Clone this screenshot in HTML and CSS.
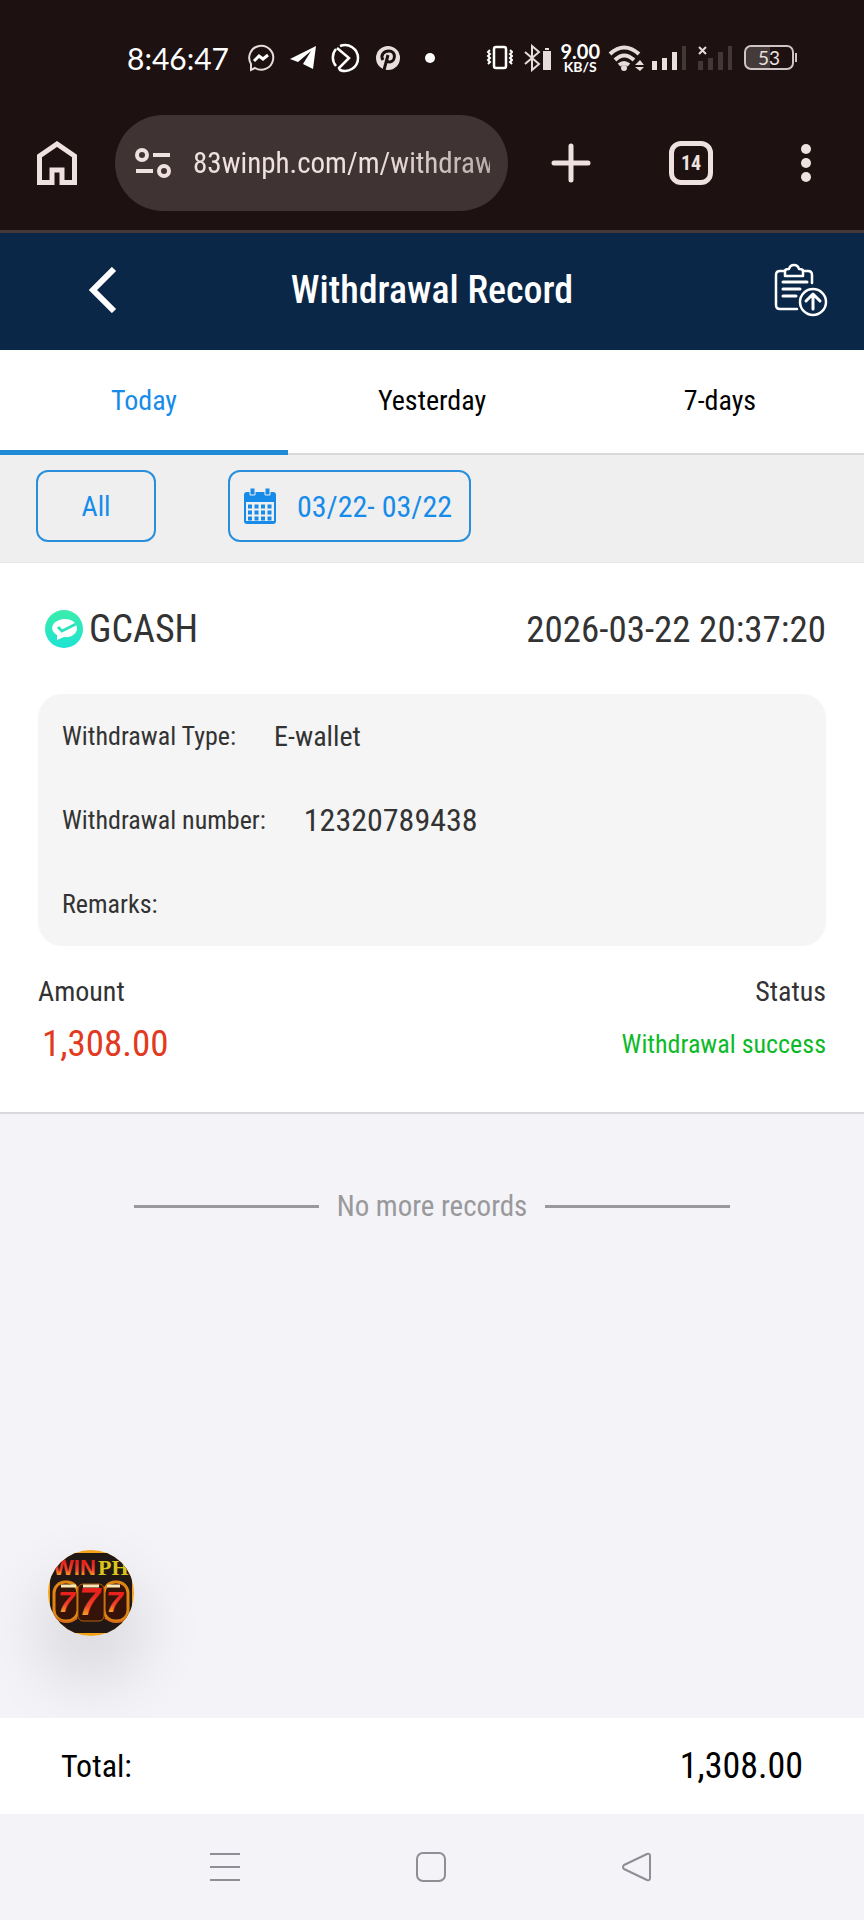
FILE: index.html
```
<!DOCTYPE html>
<html lang="en">
  <head>
    <meta charset="UTF-8" />
    <meta name="viewport" content="width=device-width, initial-scale=1.0" />
    <title>Withdrawal Record</title>
    <link rel="stylesheet" href="styles.css">
  </head>
  <body>
    <!-- status bar -->
    <div class="status-bar">
      <span class="clock">8:46:47</span>
      <div class="apps">
        <svg width="28" height="28" viewBox="0 0 28 28" fill="none" stroke="#e6dcda" stroke-width="2">
          <path d="M4 20v6l4-2a12 12 0 1 0-4-4z" />
          <path d="M7 17l5-5 4 3 5-4" stroke="#fff" stroke-width="3" />
        </svg>
        <svg width="28" height="28" viewBox="0 0 28 28" fill="#fff">
          <path d="M1 15L27 2l-3 23-10-5 8-13L9 18z" />
        </svg>
        <svg width="30" height="30" viewBox="0 0 30 30" fill="none" stroke="#fff" stroke-width="2.500">
          <path d="M9 3a13 13 0 1 1 0 24l-1-2 10-10L6 5" />
          <path d="M5 6a13 13 0 0 0 0 17" />
        </svg>
        <svg width="26" height="26" viewBox="0 0 26 26">
          <circle cx="13" cy="13" r="12" fill="#e9e0de" />
          <path d="M8 15c-3-5 1-9 6-9 7 0 7 10 1 11-2 0-3-1-3-2M13 10l-4 15" fill="none" stroke="#1d1111" stroke-width="3" />
        </svg>
        <i class="more-dot"></i>
      </div>
      <div class="signals">
        <svg width="27" height="26" viewBox="0 0 27 26" fill="none" stroke="#fff">
          <rect x="8" y="2" width="12" height="21" rx="2" stroke-width="2.5" />
          <path d="M4 5L2 7l2 2-2 2 2 2-2 2 2 2-2 2M24 5l2 2-2 2 2 2-2 2 2 2-2 2 2 2" stroke-width="2" />
        </svg>
        <svg class="bluetooth" width="28" height="28" viewBox="0 0 28 28" fill="none" stroke="#e6dcda" stroke-width="2">
          <path d="M1 8l14 12-7 6V2l7 6L1 20" />
          <path d="M20 8h6v17h-6zM21 5h4" fill="#e6dcda" />
        </svg>
        <span class="speed"><b>9.00</b><b class="unit">KB/S</b></span>
        <svg class="wifi" width="36" height="28" viewBox="0 0 36 28" fill="none" stroke="#e6dcda" stroke-width="4">
          <path d="M2 10q14-13 29 0M7 16q9-9 19 0" />
          <path d="M11 21q5-4 10 0" />
          <circle cx="16" cy="24" r="3" fill="#e6dcda" stroke="none" />
          <path d="M27 21l5-5 4 5zM27 23h9l-4 4z" fill="#e6dcda" stroke="none" />
        </svg>
        <svg width="35" height="26" viewBox="0 0 35 26" fill="#e9e0de">
          <path d="M0 16h5v9H0zM10 13h5v12h-5zM20 7h5v18h-5z" />
          <path d="M30 1h4v24h-4z" fill="#433738" />
        </svg>
        <svg class="no-sim" width="35" height="26" viewBox="0 0 35 26" fill="#433738">
          <path d="M0 16h5v9H0zM10 13h5v12h-5zM20 7h5v18h-5zM30 1h4v24h-4z" />
          <path d="M1 2l7 7M8 2L1 9" stroke="#e6dcda" stroke-width="2" />
        </svg>
        <span class="battery">53</span>
      </div>
    </div>

    <!-- browser bar -->
    <nav class="browser-bar">
      <button class="icon-btn" aria-label="Home">
        <svg width="40" height="44" viewBox="0 0 40 44" fill="none" stroke="#efe1df" stroke-width="5">
          <path d="M2.500 15L20 3l17.500 12v26.500H25V29H15v12.500H2.500z" />
        </svg>
      </button>
      <div class="address">
        <svg width="36" height="32" viewBox="0 0 36 32" fill="none" stroke="#efe1df" stroke-width="4">
          <circle cx="7" cy="8" r="5" />
          <circle cx="29" cy="24" r="5" />
          <path d="M18 8h17M1 24h17" />
        </svg>
        <input class="url" type="text" value="83winph.com/m/withdraw" aria-label="Address">
      </div>
      <button class="icon-btn" aria-label="New tab">
        <svg width="40" height="40" viewBox="0 0 40 40" stroke="#efe1df" stroke-width="5" stroke-linecap="round">
          <path d="M20 3v34M3 20h34" />
        </svg>
      </button>
      <button class="icon-btn tab-count">14</button>
      <button class="icon-btn" aria-label="Menu">
        <svg width="10" height="40" viewBox="0 0 10 40" fill="#efe1df">
          <circle cx="5" cy="6" r="5" />
          <circle cx="5" cy="20" r="5" />
          <circle cx="5" cy="34" r="5" />
        </svg>
      </button>
    </nav>

    <header class="header">
      <button class="icon-btn" aria-label="Back">
        <svg width="28" height="46" viewBox="0 0 28 46" fill="none" stroke="#fff" stroke-width="6">
          <path d="M25 2L4 23l21 21" />
        </svg>
      </button>
      <h1>Withdrawal Record</h1>
      <button class="icon-btn record-btn" aria-label="Records">
        <svg width="54" height="54" viewBox="0 0 54 54" fill="none" stroke="#fff" stroke-width="2.500" stroke-linecap="round" stroke-linejoin="round">
          <path d="M11 8H6q-4 0-4 4v30q0 4 4 4h17M29 8h5q4 0 4 4v8" />
          <path d="M11 13V8q0-2 4-2 1-4 5-4t5 4q4 0 4 2v5z" />
          <path d="M9 19h24M9 26h17M9 33h13" stroke-width="3" />
          <circle cx="39" cy="39" r="13" />
          <path d="M39 46V32M32 38l7-7 7 7" stroke-width="3" />
        </svg>
      </button>
    </header>

    <div class="tabs">
      <button class="tab active">Today</button>
      <button class="tab">Yesterday</button>
      <button class="tab">7-days</button>
    </div>

    <div class="filters">
      <button class="filter all">All</button>
      <button class="filter date">
        <svg width="34" height="38" viewBox="0 0 34 38">
          <rect x="1" y="5" width="32" height="32" rx="3" fill="#168bea" />
          <path d="M3 15h28v19H3z" fill="#efefef" />
          <path d="M7 1h5v7H7zM22 1h5v7h-5z" fill="#168bea" stroke="#efefef" stroke-width="1" />
          <path d="M5 19.500h24M5 25.500h24M5 31.500h24" stroke="#168bea" stroke-width="4" stroke-dasharray="4 2.500" />
        </svg>
        <span>03/22- 03/22</span>
      </button>
    </div>

    <main class="list">
      <section class="record">
        <div class="record-head">
          <div class="method">
            <svg width="38" height="38" viewBox="0 0 38 38">
              <defs>
                <linearGradient id="mint" x1="0" y1="0" x2="0" y2="1">
                  <stop offset="0" stop-color="#3bedab" />
                  <stop offset="1" stop-color="#1de3d3" />
                </linearGradient>
              </defs>
              <circle cx="19" cy="19" r="19" fill="url(#mint)" />
              <path d="M20 9c7 0 12 4 12 9 0 6-6 10-13 9l-7 3v-5c-10-6-3-16 8-16z" fill="#fff" />
              <path d="M13 17l4 4 14-7" fill="none" stroke="#2de4bd" stroke-width="3" />
            </svg>
            <span>GCASH</span>
          </div>
          <time>2026-03-22 20:37:20</time>
        </div>
        <dl class="detail">
          <div><dt>Withdrawal Type:</dt><dd>E-wallet</dd></div>
          <div><dt>Withdrawal number:</dt><dd class="number">12320789438</dd></div>
          <div><dt>Remarks:</dt><dd></dd></div>
        </dl>
        <div class="summary">
          <div>
            <p>Amount</p>
            <p class="amount">1,308.00</p>
          </div>
          <div class="right">
            <p>Status</p>
            <p class="success">Withdrawal success</p>
          </div>
        </div>
      </section>

      <p class="no-more">No more records</p>

      <!-- floating game entry -->
      <a class="float-logo" href="#" aria-label="WINPH 777">
        <svg width="86" height="86" viewBox="0 0 86 86">
          <defs>
            <clipPath id="round"><circle cx="43" cy="43" r="43" /></clipPath>
            <linearGradient id="fire" x1="0" y1="0" x2="0" y2="1">
              <stop offset="0.300" stop-color="#e8221c" />
              <stop offset="0.600" stop-color="#f0452a" />
              <stop offset="0.900" stop-color="#ffc21e" />
            </linearGradient>
          </defs>
          <g clip-path="url(#round)">
            <rect width="86" height="86" fill="#f5a21b" />
            <rect x="2" y="3" width="82" height="80" rx="5" fill="#211816" />
            <g fill="#351309" stroke="#df8514" stroke-width="3">
              <rect x="6" y="32" width="24" height="39" rx="11" />
              <rect x="56" y="32" width="24" height="39" rx="11" />
            </g>
            <rect x="30" y="34" width="26" height="37" rx="5" fill="#351309" stroke="#b5600f" />
            <path d="M13 36h15M35 36h16M59 36h13" stroke="#f7e8b4" stroke-width="3" />
            <path d="M8 68q11 8 21 0M57 68q12 8 22 0" fill="none" stroke="#d86a13" stroke-width="2" />
            <g class="logo-word">
              <text x="5" y="25" fill="url(#fire)">WIN</text>
              <text x="50" y="25" fill="#dbc51b" class="logo-ph">PH</text>
            </g>
            <g class="logo-seven" fill="url(#fire)">
              <text x="10" y="62">7</text>
              <text x="58" y="62">7</text>
              <text x="31" y="65" class="mid">7</text>
            </g>
          </g>
        </svg>
      </a>
    </main>

    <footer class="total">
      <span>Total:</span>
      <span class="total-amount">1,308.00</span>
    </footer>

    <nav class="system-nav">
      <button class="icon-btn" aria-label="Recent apps">
        <svg width="32" height="32" viewBox="0 0 32 32" stroke="#8f8e94" stroke-width="2"><path d="M1 3h30M1 16h30M1 29h30" /></svg>
      </button>
      <button class="icon-btn" aria-label="Home screen">
        <svg width="32" height="32" viewBox="0 0 32 32" fill="none" stroke="#8f8e94" stroke-width="2"><rect x="2" y="2" width="28" height="28" rx="6" /></svg>
      </button>
      <button class="icon-btn" aria-label="Go back">
        <svg width="32" height="32" viewBox="0 0 32 32" fill="none" stroke="#8f8e94" stroke-width="2" stroke-linejoin="round"><path d="M3 14L26 3q3-1 3 2v22q0 3-3 2L3 18q-2-2 0-4z" /></svg>
      </button>
    </nav>
  </body>
</html>
```
FILE: styles.css
```
* {
  box-sizing: border-box;
  margin: 0;
  padding: 0;
}
body {
  display: flex;
  flex-direction: column;
  min-height: 100vh;
  font-family: 'Roboto Condensed', 'Liberation Sans Narrow', 'DejaVu Sans Condensed', sans-serif;
  font-size: 28px;
  color: #333;
  background-color: #f3f3f8;
}
button,
input {
  border: none;
  background: none;
  font: inherit;
  color: inherit;
}
svg {
  display: block;
  flex: none;
}
.icon-btn {
  display: flex;
  align-items: center;
  justify-content: center;
}

/* status bar */
.status-bar {
  display: flex;
  align-items: center;
  height: 115px;
  padding: 0 70px 0 127px;
  color: #fff;
  background-color: #1d1111;
}
.clock {
  font-family: Lato, sans-serif;
  font-size: 30px;
}
.apps,
.signals {
  display: flex;
  align-items: center;
}
.apps {
  gap: 14px;
  margin-left: 18px;
}
.more-dot {
  width: 10px;
  height: 10px;
  margin-left: 10px;
  border-radius: 50%;
  background-color: #fff;
}
.signals {
  gap: 8px;
  margin-left: auto;
}
.speed {
  display: flex;
  flex-direction: column;
  align-items: center;
  font-family: Lato, sans-serif;
  font-size: 20px;
  line-height: 18px;
}
.speed .unit {
  font-size: 14px;
  line-height: 14px;
}
.bluetooth,
.no-sim,
.battery {
  margin-left: 3px;
}
.battery {
  position: relative;
  width: 50px;
  height: 25px;
  border: 2px solid #cfc4c4;
  border-radius: 7px;
  font: 19px/21px Lato, sans-serif;
  text-align: center;
  color: #e9e0de;
  background: linear-gradient(90deg, #453a3a 53%, #1d1111 53%);
}
.battery::after {
  content: '';
  position: absolute;
  top: 6px;
  right: -5px;
  width: 2px;
  height: 9px;
  background-color: #cfc4c4;
}
/* status bar end */

/* browser bar */
.browser-bar {
  display: flex;
  align-items: center;
  height: 118px;
  padding: 0 53px 19px 37px;
  border-bottom: 3px solid #433939;
  color: #efe1df;
  background-color: #1d1111;
}
.address {
  display: flex;
  flex: 1;
  align-items: center;
  gap: 22px;
  min-width: 0;
  height: 96px;
  padding: 0 18px 0 20px;
  margin: 0 43px 0 38px;
  border-radius: 48px;
  background-color: #403333;
}
.url {
  flex: 1;
  min-width: 0;
  font-size: 29px;
  -webkit-mask-image: linear-gradient(90deg, #000 60%, rgba(0, 0, 0, 0.7));
  mask-image: linear-gradient(90deg, #000 60%, rgba(0, 0, 0, 0.7));
}
.tab-count {
  width: 44px;
  height: 44px;
  margin: 0 88px 0 78px;
  border: 5px solid #efe1df;
  border-radius: 12px;
  font-size: 20px;
  font-weight: bold;
}
/* browser bar end */

/* header */
.header {
  display: grid;
  grid-template-columns: 206px 1fr 206px;
  align-items: center;
  height: 117px;
  padding-bottom: 4px;
  color: #fff;
  background-color: #0a2747;
}
.header h1 {
  font-size: 38px;
  font-weight: 500;
  text-align: center;
}
.record-btn {
  justify-self: end;
  margin-right: 36px;
}
/* header end */

/* tabs */
.tabs {
  display: flex;
  height: 105px;
  border-bottom: 2px solid #d9d9d9;
  background-color: #fff;
}
.tab {
  flex: 1;
  height: 105px;
  border-bottom: 5px solid transparent;
  color: #000;
}
.tab.active {
  border-color: #1f8bd6;
  color: #168bea;
}
/* tabs end */

.filters {
  display: flex;
  gap: 72px;
  padding: 15px 36px 20px;
  border-bottom: 1px solid #e6e6e6;
  background-color: #efefef;
}
.filter {
  display: flex;
  align-items: center;
  justify-content: center;
  height: 72px;
  border: 2px solid #2a8fdb;
  border-radius: 12px;
  color: #168bea;
}
.all {
  width: 120px;
}
.date {
  gap: 20px;
  padding: 0 17px 0 13px;
  font-size: 30px;
}

/* list */
.list {
  position: relative;
  flex: 1;
}
.record {
  padding: 36px 38px 42px;
  border-bottom: 2px solid #d9d9dc;
  background-color: #fff;
}
.record-head,
.method,
.summary {
  display: flex;
  align-items: center;
  justify-content: space-between;
}
.record-head {
  height: 60px;
  margin-bottom: 35px;
  font-size: 38px;
}
.record-head time {
  font-size: 37px;
}
.method {
  gap: 6px;
  padding-left: 7px;
}
.detail {
  padding: 0 24px;
  border-radius: 24px;
  background-color: #f5f5f5;
}
.detail div {
  display: flex;
  align-items: center;
  gap: 38px;
  height: 84px;
}
.detail dt {
  font-size: 26px;
}
.detail .number {
  font-size: 32px;
}
.summary {
  padding-top: 20px;
  line-height: 52px;
}
.right {
  text-align: right;
}
.amount {
  padding-left: 4px;
  font-size: 37px;
  color: #e23a20;
}
.success {
  font-size: 26px;
  color: #0cba28;
}
.no-more {
  display: flex;
  align-items: center;
  gap: 18px;
  padding: 66px 134px 0;
  font-size: 29px;
  line-height: 52px;
  color: #99999c;
}
.no-more::before,
.no-more::after {
  content: '';
  flex: 1;
  height: 3px;
  background-color: #99999c;
}
.float-logo {
  position: absolute;
  bottom: 82px;
  left: 48px;
  border-radius: 50%;
  box-shadow: 0 36px 64px 12px rgba(0, 0, 0, 0.1);
}
.logo-word {
  font: bold 22px 'Liberation Sans', sans-serif;
}
.logo-ph {
  font-family: 'Liberation Serif', serif;
}
.logo-seven {
  font: italic bold 30px 'Liberation Sans', sans-serif;
}
.logo-seven .mid {
  font-size: 38px;
}
/* list end */

.total {
  position: relative;
  display: flex;
  align-items: center;
  justify-content: space-between;
  height: 96px;
  padding: 0 61px;
  font-size: 32px;
  color: #000;
  background-color: #fff;
}
.total-amount {
  font-size: 36px;
}

.system-nav {
  display: flex;
  align-items: center;
  justify-content: space-between;
  height: 106px;
  padding: 0 211px 0 209px;
}
```
